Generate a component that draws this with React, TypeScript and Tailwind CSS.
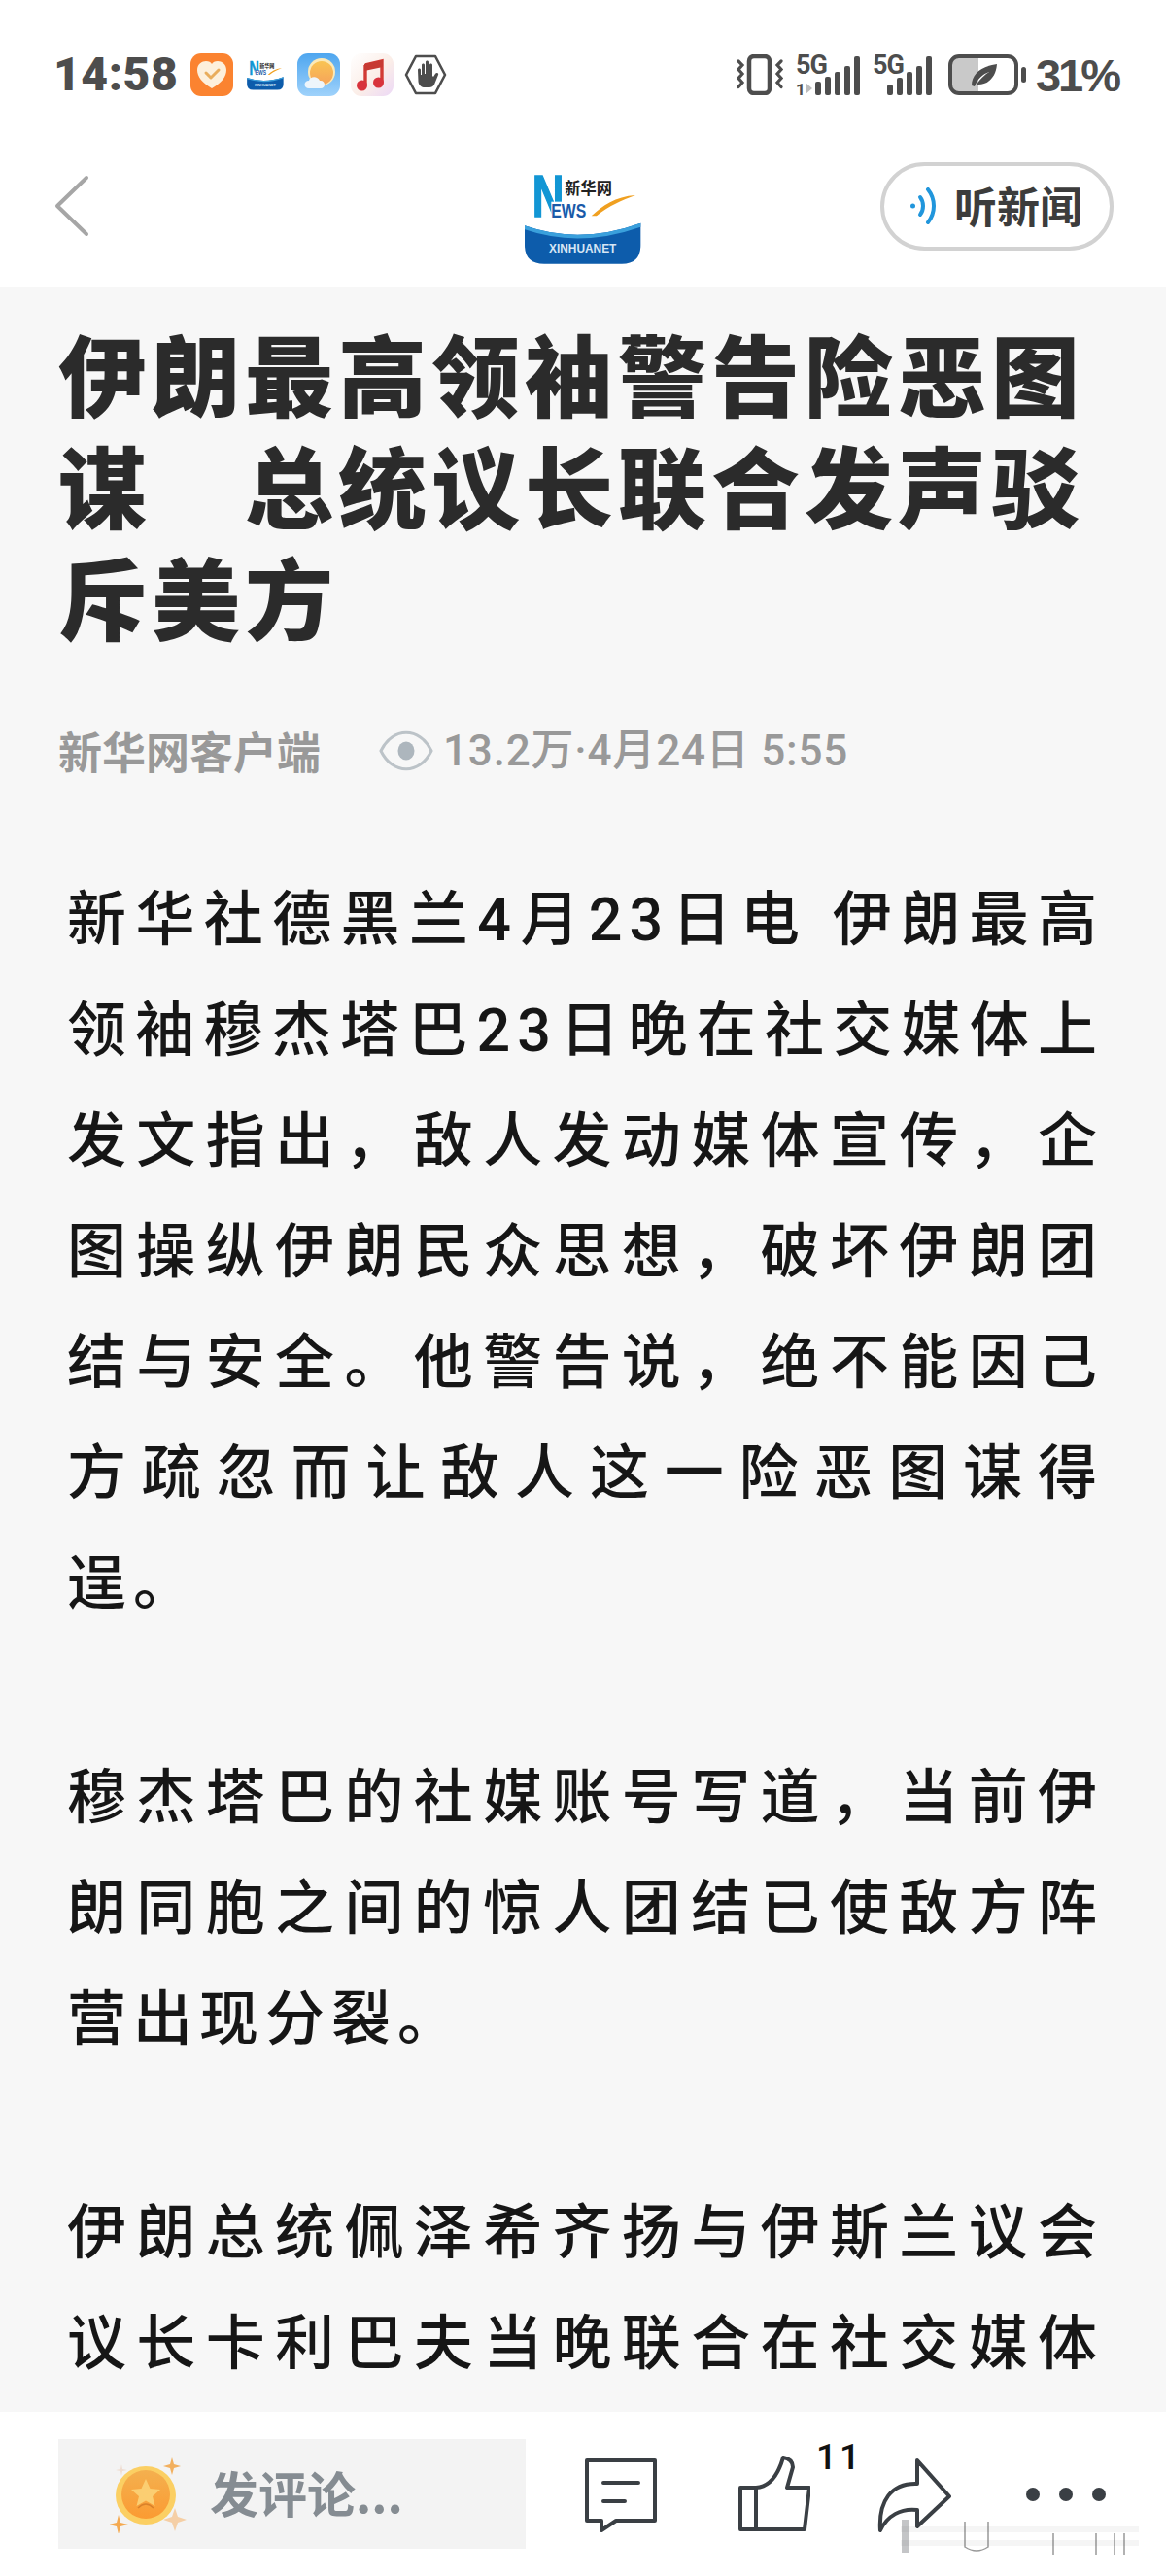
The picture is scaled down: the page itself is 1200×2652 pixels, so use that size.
import React from 'react';

const cjk = '"Noto Sans CJK SC", sans-serif';

const Logo = ({ className }: { className: string }) => (
    <svg viewBox="0 0 420 345" className={className}>
        <text x="53" y="175" fontSize="186" fontWeight="700" fill="#1296d4" stroke="#1296d4" strokeWidth="5" fontFamily="Liberation Sans" textLength="98" lengthAdjust="spacingAndGlyphs">N</text>
        <rect x="112" y="128" width="112" height="52" fill="#fff" />
        <text x="112" y="176" fontSize="62" fontWeight="700" fill="#1a5aa8" fontFamily="Liberation Sans" textLength="108" lengthAdjust="spacingAndGlyphs">EWS</text>
        <text x="154" y="106" fontSize="50" fontWeight="700" fill="#222" fontFamily="Noto Sans CJK SC" textLength="146" lengthAdjust="spacingAndGlyphs">新华网</text>
        <path d="M236 172 C270 140 310 112 372 108 C330 124 290 140 252 172 Z" fill="#f0a020" />
        <path d="M30 202 Q200 262 388 194 L388 262 Q388 320 330 320 L90 320 Q30 320 30 262 Z" fill="#0d5cab" />
        <path d="M30 202 Q200 262 388 194 L388 206 Q200 272 30 214 Z" fill="#3aa0dc" />
        <text x="209" y="285" textAnchor="middle" fontSize="37" fontWeight="700" fill="#d6e6f5" fontFamily="Liberation Sans" textLength="208" lengthAdjust="spacingAndGlyphs">XINHUANET</text>
    </svg>
);

const Vibrate = () => (
    <svg width="48" height="42" viewBox="0 0 48 42" fill="none" stroke="#4d4d4d" strokeLinecap="round">
        <rect x="13" y="2" width="21" height="38" rx="5" strokeWidth="4.5" />
        <path d="M2 7 L6 11 L2 15.5 L6 20 L2 24.5 L6 29 L2 33.5" strokeWidth="3.2" />
        <path d="M46 7 L42 11 L46 15.5 L42 20 L46 24.5 L42 29 L46 33.5" strokeWidth="3.2" />
    </svg>
);

const Bars = ({ heights }: { heights: number[] }) => (
    <div className="flex items-end gap-[4px] h-[40px]">
        {heights.map((h, i) => (
            <div key={i} className="w-[6px] rounded-[2px] bg-[#4d4d4d]" style={{ height: h }} />
        ))}
    </div>
);

const Signal = ({ sim }: { sim?: boolean }) => (
    <div className="relative flex items-end h-[41px]" style={{ width: sim ? 66 : 61 }}>
        <span className="absolute left-0 top-[-5px] text-[27px] leading-[30px] font-bold text-[#4d4d4d] tracking-[-1px] font-['Roboto',sans-serif]">5G</span>
        {sim && <span className="absolute left-0 bottom-[-4px] text-[17px] leading-[20px] font-bold text-[#4d4d4d] font-['Roboto',sans-serif]">1</span>}
        {sim && <span className="absolute left-[9px] bottom-[1px] w-0 h-0 border-y-[6px] border-y-transparent border-l-[7px] border-l-[#bdbdbd] ml-[1px]" />}
        <div className="ml-auto">
            <Bars heights={sim ? [14, 19, 24, 30, 40] : [11, 18, 24, 30, 40]} />
        </div>
    </div>
);

const Battery = () => (
    <svg width="82" height="42" viewBox="0 0 82 42" fill="none">
        <rect x="3" y="4" width="28" height="34" fill="#c9c9c9" />
        <rect x="2" y="2" width="68" height="38" rx="9" stroke="#4d4d4d" strokeWidth="4" />
        <rect x="75" y="13" width="5" height="16" rx="2.5" fill="#4d4d4d" />
        <path d="M24 32 C24 20 34 12 50 10 C49 24 40 32 29 31 C33 25 37 21 42 18 C36 20 30 25 27 33 Z" fill="#4d4d4d" />
    </svg>
);

const AppIcons = () => (
    <div className="flex items-center gap-[11px]">
        <svg width="44" height="44" viewBox="0 0 44 44">
            <rect width="44" height="44" rx="11" fill="#fb8330" />
            <path d="M22 36 C12 30 7 24 7 17 C7 11 12 8 16 8 C19 8 21 9 22 11 C23 9 25 8 28 8 C32 8 37 11 37 17 C37 24 32 30 22 36 Z" fill="#fdf0dc" />
            <path d="M16 20 L21 25 L29 17" fill="none" stroke="#e9ad5c" strokeWidth="3" strokeLinecap="round" strokeLinejoin="round" />
        </svg>
        <Logo className="w-[44px] h-[44px]" />
        <svg width="44" height="44" viewBox="0 0 44 44">
            <defs>
                <linearGradient id="sky" x1="0" y1="0" x2="0" y2="1"><stop offset="0" stopColor="#4ea6ef" /><stop offset="1" stopColor="#9fd2fb" /></linearGradient>
                <linearGradient id="sun" x1="0" y1="0" x2="0" y2="1"><stop offset="0" stopColor="#f9c453" /><stop offset="1" stopColor="#f6a35b" /></linearGradient>
            </defs>
            <rect width="44" height="44" rx="11" fill="url(#sky)" />
            <circle cx="25" cy="19" r="14" fill="#fbe9b8" />
            <circle cx="25" cy="20" r="12" fill="url(#sun)" />
            <path d="M12 36 C6 36 6 28 12 28 C13 23 21 23 23 28 C29 27 30 36 24 36 Z" fill="#eef5fb" />
        </svg>
        <svg width="44" height="44" viewBox="0 0 44 44">
            <defs>
                <linearGradient id="mus" x1="0" y1="0" x2="1" y2="1"><stop offset="0" stopColor="#ffffff" /><stop offset="0.55" stopColor="#fbeee8" /><stop offset="1" stopColor="#ecd8f6" /></linearGradient>
            </defs>
            <rect width="44" height="44" rx="11" fill="url(#mus)" />
            <path d="M15 12 L32 8 L32 30" fill="none" stroke="#d23b35" strokeWidth="3.4" />
            <path d="M15 12 L15 33" fill="none" stroke="#d23b35" strokeWidth="3.4" />
            <path d="M14 11 L33 7 L33 14 L14 18 Z" fill="#c73a32" />
            <circle cx="11.5" cy="33" r="5.5" fill="#d8333c" />
            <circle cx="28.5" cy="30" r="5.5" fill="#d8333c" />
        </svg>
        <svg width="44" height="44" viewBox="0 0 44 44">
            <path d="M12 3 L32 3 L42 22 L32 41 L12 41 L2 22 Z" fill="none" stroke="#4d4d4d" strokeWidth="2.6" strokeLinejoin="round" />
            <path d="M14 17 C14 15 17 15 17 17 L17 22 L18 22 L18 12 C18 10 21 10 21 12 L21 21 L22 21 L22 9 C22 7 25 7 25 9 L25 21 L26 21 L26 12 C26 10 29 10 29 12 L29 23 L30 24 L32 21 C33 19 36 20 35 22 L31 32 C30 34 28 35 26 35 L21 35 C18 35 15 33 14.500 29 Z" fill="#4d4d4d" />
        </svg>
    </div>
);

const StatusBar = () => (
    <div className="flex items-center justify-between h-[44px] mt-[55px] pl-[55px] pr-[49px]">
        <div className="flex items-center gap-[13px]">
            <span className="text-[48px] leading-none font-black text-[#4d4d4d] tracking-[0.5px] font-['Roboto',sans-serif]">14:58</span>
            <AppIcons />
        </div>
        <div className="flex items-center">
            <Vibrate />
            <div className="ml-[13px]"><Signal sim /></div>
            <div className="ml-[13px]"><Signal /></div>
            <div className="ml-[17px]"><Battery /></div>
            <span className="ml-[8px] text-[47px] leading-none font-bold text-[#4d4d4d] tracking-[-3px] font-['Liberation_Sans',sans-serif]">31%</span>
        </div>
    </div>
);

const NavBar = () => (
    <div className="relative flex items-center justify-between h-[140px] mt-[43px] mb-[13px] pl-[56px] pr-[54px]">
        <svg width="36" height="64" viewBox="0 0 36 64" fill="none" stroke="#a6a6a6" strokeWidth="4" strokeLinecap="round" strokeLinejoin="round">
            <path d="M33 3 L3 32 L33 61" />
        </svg>
        <Logo className="absolute left-[530px] top-[23px] w-[140px] h-[115px]" />
        <div className="flex items-center w-[240px] h-[91px] rounded-[46px] border-[4px] border-[#d2d2d2] bg-white pl-[26px]">
            <svg width="30" height="38" viewBox="0 0 30 38" fill="none" stroke="#2196dc" strokeLinecap="round">
                <circle cx="3.500" cy="19" r="2.500" fill="#2196dc" stroke="none" />
                <path d="M11 10 C15 15 15 23 11 28" strokeWidth="4" />
                <path d="M19 2 C27 12 27 26 19 36" strokeWidth="4" />
            </svg>
            <span className="ml-[16px] mt-[-3px] text-[44px] leading-none font-bold text-[#3c3c3c]" style={{ fontFamily: cjk }}>听新闻</span>
        </div>
    </div>
);

const paragraphs: string[][] = [
    [
        '新华社德黑兰4月23日电 伊朗最高',
        '领袖穆杰塔巴23日晚在社交媒体上',
        '发文指出，敌人发动媒体宣传，企',
        '图操纵伊朗民众思想，破坏伊朗团',
        '结与安全。他警告说，绝不能因己',
        '方疏忽而让敌人这一险恶图谋得',
    ],
    ['穆杰塔巴的社媒账号写道，当前伊', '朗同胞之间的惊人团结已使敌方阵'],
    ['伊朗总统佩泽希齐扬与伊斯兰议会', '议长卡利巴夫当晚联合在社交媒体'],
];
const lastLines = ['逞。', '营出现分裂。', ''];

const Article = () => (
    <main className="flex-1 overflow-hidden bg-[#f7f7f7]">
        <h1 className="pt-[30px] pl-[60px] text-[91px] leading-[115px] font-black tracking-[5px] text-[#2b2b2b] whitespace-pre" style={{ fontFamily: cjk }}>
            {'伊朗最高领袖警告险恶图\n谋　总统议长联合发声驳\n斥美方'}
        </h1>
        <div className="flex items-center h-[50px] mt-[78px] pl-[60px] text-[#999999]">
            <span className="mt-[-2px] text-[45px] leading-none font-bold" style={{ fontFamily: cjk }}>新华网客户端</span>
            <svg className="ml-[60px]" width="56" height="44" viewBox="0 0 56 44" fill="none">
                <path d="M2 22 C14 -3 42 -3 54 22 C42 47 14 47 2 22 Z" stroke="#bcc3c8" strokeWidth="3" />
                <ellipse cx="28" cy="22" rx="8.500" ry="9.500" fill="#adb6bd" />
            </svg>
            <span className="ml-[10px] text-[44px] leading-none font-medium tracking-[0.8px] font-['Roboto','Noto_Sans_CJK_SC',sans-serif]">13.2万·4月24日 5:55</span>
        </div>
        <div className="mt-[92px] pl-[69px] w-[1136px] text-[61px] leading-[114px] font-medium tracking-[7px] text-[#161616] font-['Roboto','Noto_Sans_CJK_SC',sans-serif]">
            {paragraphs.map((lines, p) => (
                <div key={p} className="mb-[106px]">
                    {lines.map(l => (
                        <div key={l} className="text-justify [text-align-last:justify] whitespace-pre-wrap">{l}</div>
                    ))}
                    {lastLines[p] && <div>{lastLines[p]}</div>}
                </div>
            ))}
        </div>
    </main>
);

const Coin = () => (
    <svg width="80" height="80" viewBox="0 0 80 80">
        <defs>
            <linearGradient id="coin" x1="0" y1="0" x2="0" y2="1"><stop offset="0" stopColor="#f4b04f" /><stop offset="1" stopColor="#fb9b32" /></linearGradient>
        </defs>
        <path d="M64 2 L66 9 L73 11 L66 13 L64 20 L62 13 L55 11 L62 9 Z" fill="#f2b05f" />
        <path d="M12 9 L13 14 L18 15 L13 16 L12 21 L11 16 L6 15 L11 14 Z" fill="#eedcd0" />
        <ellipse cx="37" cy="41" rx="31" ry="30" fill="#fbcf63" />
        <ellipse cx="37" cy="40" rx="25" ry="25" fill="url(#coin)" />
        <path d="M37 24 L41.500 34 L52 35 L44 42 L46.500 52 L37 46.500 L27.500 52 L30 42 L22 35 L32.500 34 Z" fill="#fbce72" />
        <path d="M29 54 Q37 46 45 54" fill="none" stroke="#d9812a" strokeWidth="1.6" />
        <path d="M67 54 L70 63 L79 66 L70 69 L67 78 L64 69 L55 66 L64 63 Z" fill="#f5cfa6" />
        <path d="M9 61 L11 69 L19 71 L11 73 L9 81 L7 73 L-1 71 L7 69 Z" fill="#f4a94f" />
    </svg>
);

const BottomBar = () => (
    <footer className="relative flex items-center h-[169px] bg-white pl-[60px]">
        <div className="flex items-center w-[481px] h-[113px] bg-[#f3f3f3] pl-[53px]">
            <Coin />
            <span className="ml-[23px] mt-[-5px] text-[50px] leading-none font-bold text-[#858c92]" style={{ fontFamily: cjk }}>发评论...</span>
        </div>
        <svg className="ml-[60px] mt-[2px]" width="76" height="78" viewBox="0 0 76 78" fill="none" stroke="#3a3f44" strokeWidth="4" strokeLinejoin="round" strokeLinecap="round">
            <path d="M3 3 L73 3 L73 65 L33 65 L18 75 L18 65 L3 65 Z" />
            <path d="M20 26 L56 26 M20 45 L42 45" />
        </svg>
        <div className="relative ml-[83px] mt-[-2px] w-[74px] h-[78px]">
            <svg width="74" height="78" viewBox="0 0 74 78" fill="none" stroke="#3a3f44" strokeWidth="4" strokeLinejoin="round" strokeLinecap="round">
                <path d="M2 33 L18 33 L18 76 L2 76 Z" />
                <path d="M18 33 C34 32 42 16 46 2 C52 3 56 6 56 12 L50 33 L73 33 L68 76 L18 76" />
            </svg>
            <span className="absolute left-[80px] top-[-12px] text-[37px] leading-[28px] font-medium text-[#111] tracking-[3px] font-['Roboto',sans-serif]">11</span>
        </div>
        <svg className="ml-[69px] mt-[2px]" width="76" height="76" viewBox="0 0 76 76" fill="none" stroke="#3a3f44" strokeWidth="4" strokeLinejoin="round" strokeLinecap="round">
            <path d="M41 2 L74 39 L41 70 L41 53 C24 51 10 59 3 74 C1 44 14 25 41 26 Z" />
        </svg>
        <div className="flex gap-[20px] ml-[77px]">
            <div className="w-[14px] h-[14px] rounded-full bg-[#3a3f44]" />
            <div className="w-[14px] h-[14px] rounded-full bg-[#3a3f44]" />
            <div className="w-[14px] h-[14px] rounded-full bg-[#3a3f44]" />
        </div>
        {/* smudge left over from the erased nav handle */}
        <svg className="absolute left-[927px] top-[111px]" width="245" height="38" viewBox="0 0 245 38" fill="none">
            <rect x="1" y="0" width="8" height="34" fill="#3a3f44" opacity="0.3" />
            <path d="M0 10 H245 M0 24 H245" stroke="#000" strokeOpacity="0.04" strokeWidth="6" />
            <path d="M66 2 V28 Q78 36 90 28 V2" stroke="#333" strokeWidth="1.5" opacity="0.5" />
            <path d="M157 14 V36 M201 14 V36 M220 14 V36 M230 14 V36" stroke="#333" strokeWidth="1.500" opacity="0.5" />
        </svg>
    </footer>
);

export default function App() {
    return (
        <div className="flex flex-col w-[1200px] h-[2652px] overflow-hidden bg-white">
            <header className="bg-white">
                <StatusBar />
                <NavBar />
            </header>
            <Article />
            <BottomBar />
        </div>
    );
}
